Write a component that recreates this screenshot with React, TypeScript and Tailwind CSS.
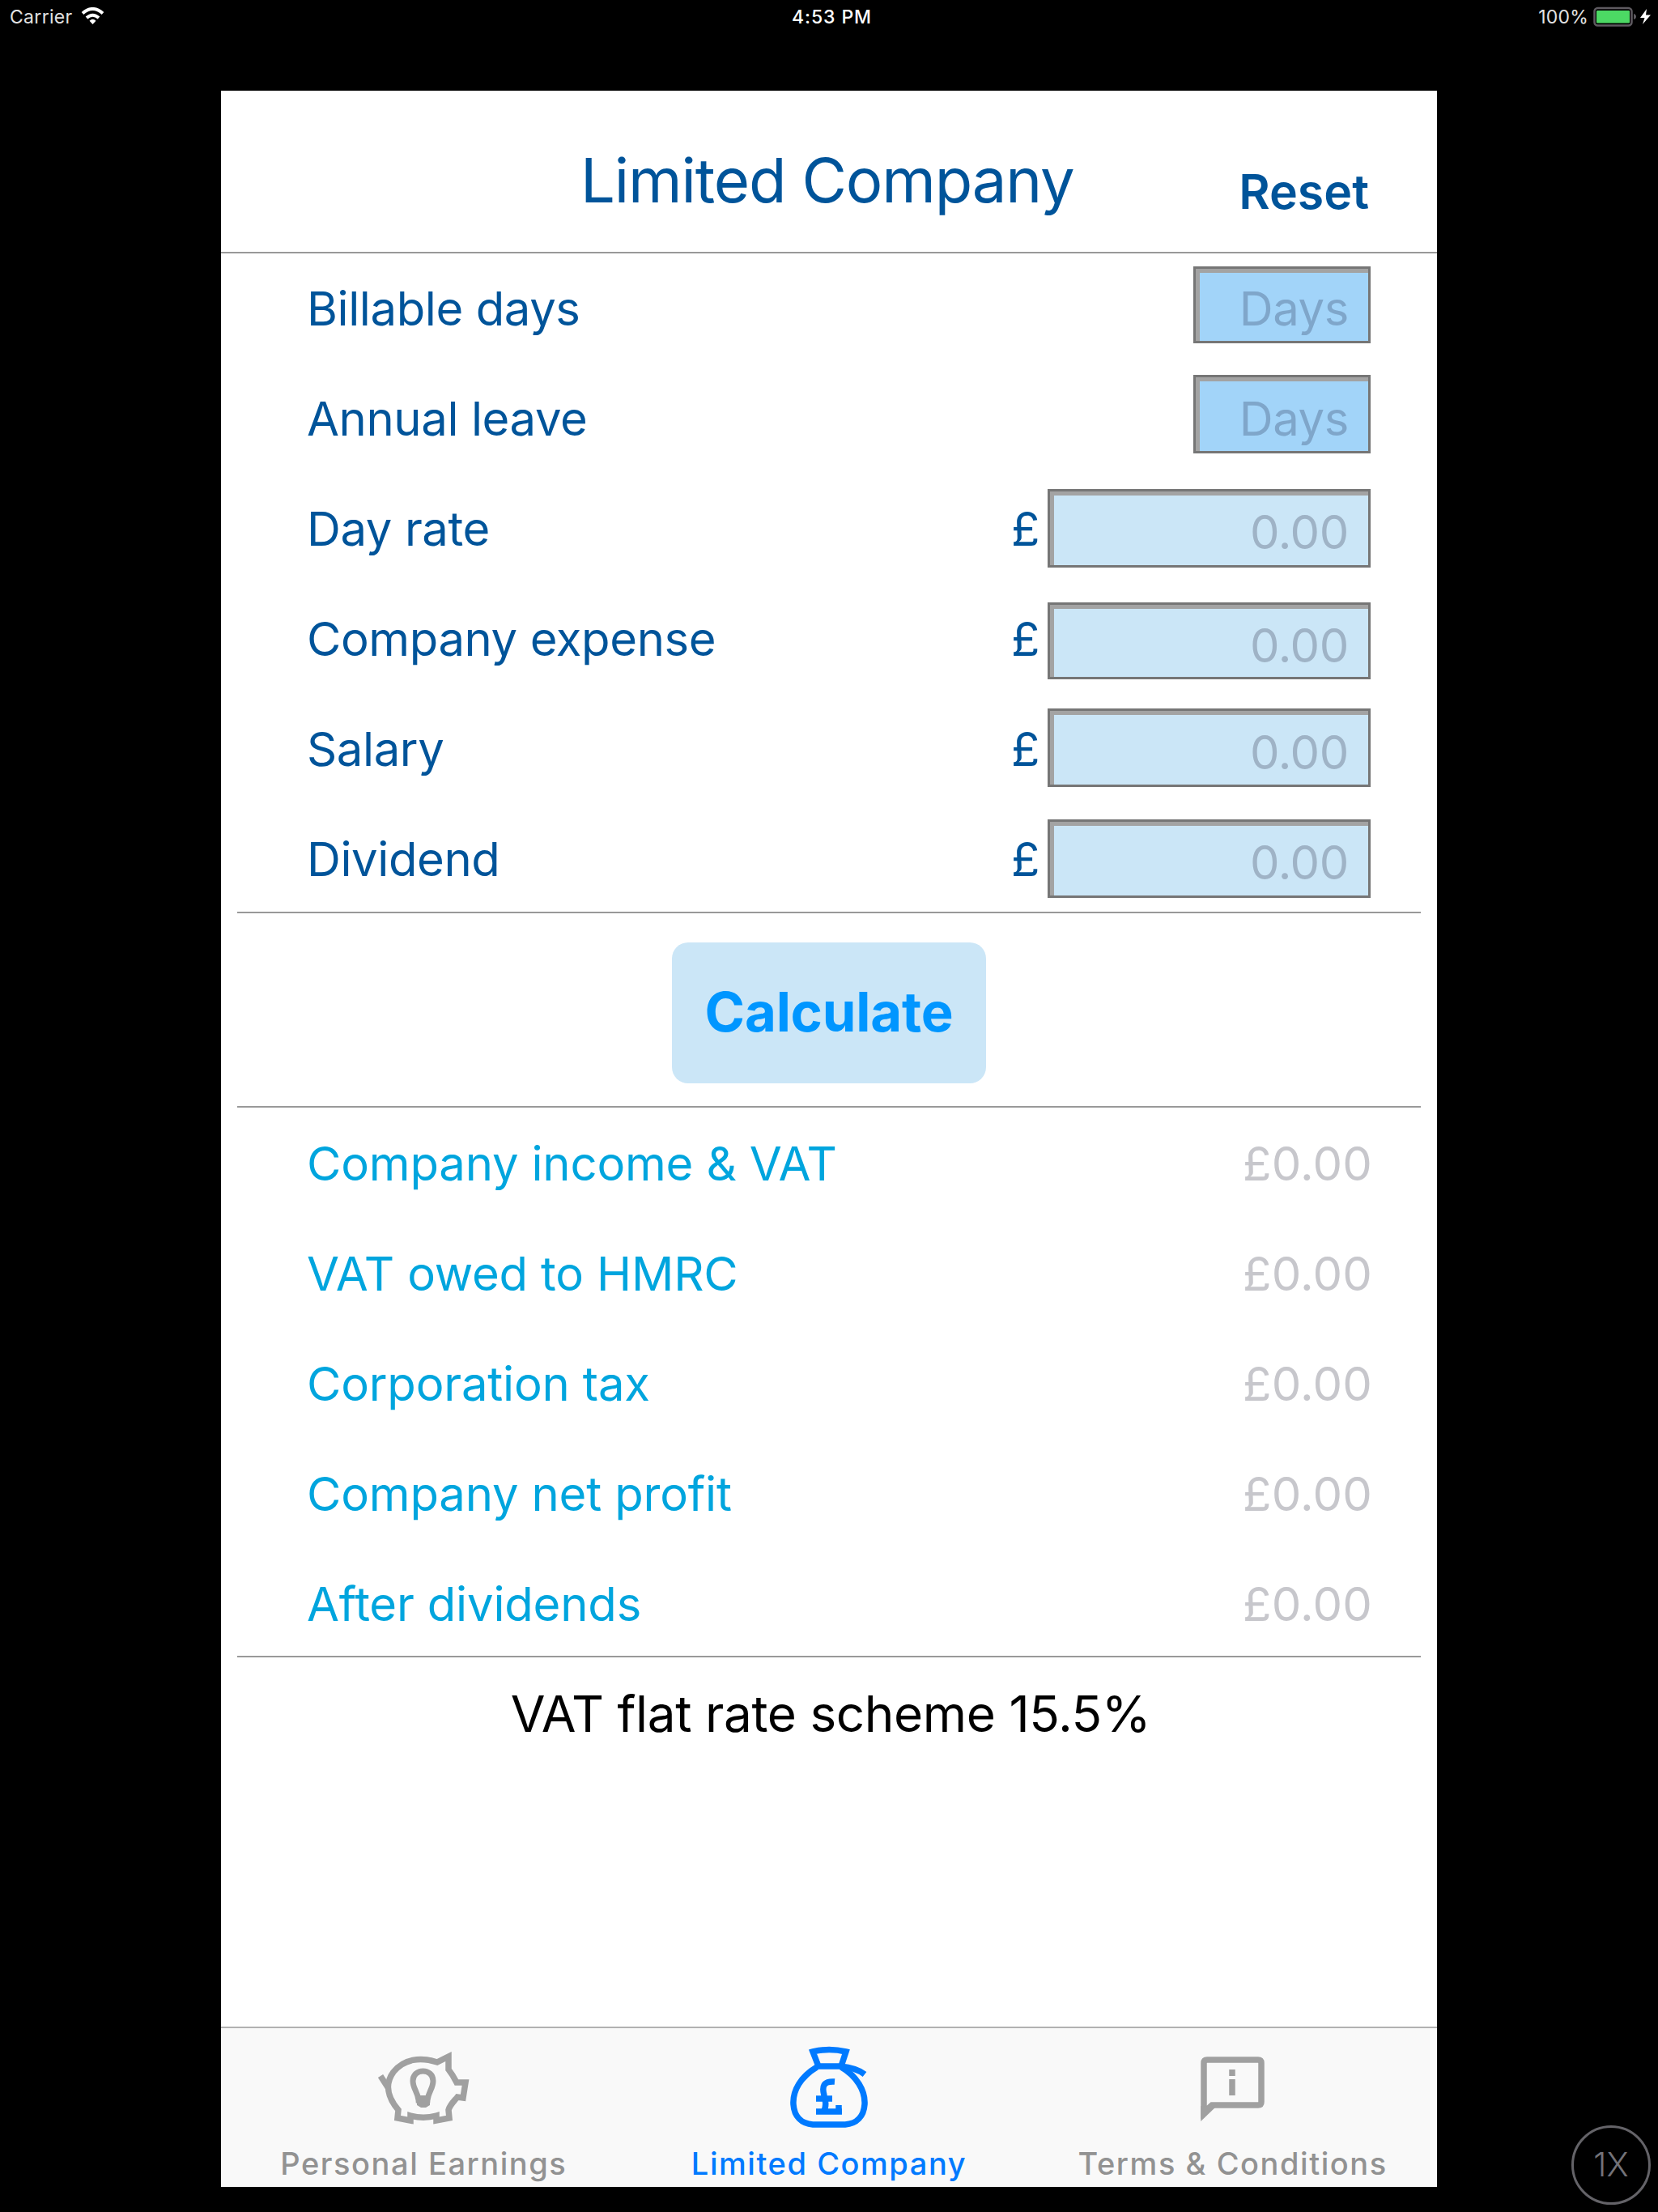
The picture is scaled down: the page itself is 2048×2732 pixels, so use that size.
import React from "react";

const inputs = [
  { label: "Billable days", kind: "days", box: "mt-[16px] h-[95px] pt-[14px]" },
  { label: "Annual leave", kind: "days", box: "mt-[14px] h-[97px] pt-[16px]" },
  { label: "Day rate", kind: "money", box: "mt-[19px] h-[97px] pt-[15px]" },
  { label: "Company expense", kind: "money", box: "mt-[23px] h-[95px] pt-[15px]" },
  { label: "Salary", kind: "money", box: "mt-[18px] h-[97px] pt-[16px]" },
  { label: "Dividend", kind: "money", box: "mt-[19px] h-[97px] pt-[15px]" },
];

const results = [
  "Company income & VAT",
  "VAT owed to HMRC",
  "Corporation tax",
  "Company net profit",
  "After dividends",
];

function PigIcon() {
  return (
    <svg viewBox="466 2532 116 94" className="h-[94px] w-[116px]" fill="none" stroke="#a0a0a0" strokeWidth="7.5">
      <path d="M541 2547 C520 2540 500 2543 487 2559 C476 2574 480 2591 493 2606 L492 2616 L508 2619 L508 2613 C519 2616 529 2616 540 2613 L540 2619 L556 2616 L555 2606 C557 2599 562 2595 566 2590 L573 2591 L576 2572 L565 2572 C562 2566 559 2561 555 2556 L555 2540 Z" />
      <path d="M471 2564 L480 2578" />
      <path d="M511 2570 C511 2554 536 2554 536 2570 C536 2580 530 2583 529 2594 L518 2594 C517 2583 511 2580 511 2570 Z" strokeWidth="7" />
      <path d="M516 2588 H532 V2600 L527 2603 H521 L516 2600 Z" fill="#a0a0a0" stroke="none" />
    </svg>
  );
}

function BagIcon() {
  return (
    <svg viewBox="974 2526 100 104" className="h-[104px] w-[100px]" fill="none" stroke="#007aff" strokeWidth="7.5">
      <path d="M1004 2534 Q1024 2529 1045 2534 L1039 2552 H1011 Z" />
      <path d="M1009 2553 C989 2565 979 2582 980 2599 C981 2614 990 2623 1004 2624 H1044 C1058 2623 1067 2614 1068 2599 C1069 2582 1058 2564 1039 2553" />
      <path d="M1038 2552 Q1058 2554 1068 2562" />
      <path d="M1031 2571 C1017 2570 1015 2577 1018 2588 C1021 2598 1020 2604 1017 2608 H1036 V2600 M1008 2592 H1028 M1008 2608 H1040" />
    </svg>
  );
}

function InfoBubbleIcon() {
  return (
    <svg viewBox="1482 2538 82 84" className="h-[84px] w-[82px]" fill="none" stroke="#a0a0a0" strokeWidth="7.5">
      <path d="M1487 2609 V2548 Q1487 2544 1491 2544 H1554 Q1558 2544 1558 2548 V2596 Q1558 2600 1554 2600 H1497 L1487 2609 Z" />
      <path d="M1483.25 2601 V2620 L1502 2602 Z" fill="#a0a0a0" stroke="none" />
      <path d="M1522 2556 V2564 M1522 2568 V2588" strokeWidth="7.5" />
    </svg>
  );
}

function StatusBar() {
  return (
    <div className="grid h-[112px] grid-cols-3 items-start text-[23px] leading-[28px] text-[#e2e2e2]">
      <div className="flex pt-[7px] pl-[12px]">
        <span className="w-[88px] tracking-[0.3px]">Carrier</span>
        <svg viewBox="0 0 28 21" className="mt-[2px] h-[21px] w-[29px]" fill="none" stroke="#fff" strokeWidth="4">
          <path d="M1.5 7.5 Q14 -3.5 26.5 7.5" />
          <path d="M6.5 13 Q14 6.5 21.5 13" />
          <path d="M14 21 L10 16.8 Q14 12.8 18 16.8 Z" fill="#fff" stroke="none" />
        </svg>
      </div>
      <div className="pt-[7px] pl-[7px] text-center font-medium tracking-[0.9px] text-white">4:53 PM</div>
      <div className="flex justify-end pt-[7px] pr-[8px]">
        <span className="mr-[6px] tracking-[0.2px]">100%</span>
        <svg viewBox="1968 8 72 26" className="mt-[1px] h-[26px] w-[72px]">
          <rect x="1969.5" y="10" width="46" height="21.5" rx="4" fill="none" stroke="#5e5a60" strokeWidth="2.5" />
          <rect x="1972" y="13" width="41" height="15.5" rx="1" fill="#4cd964" />
          <path d="M2018 17 Q2021 18 2021 20.5 Q2021 23 2018 24 Z" fill="#5e5a60" />
          <path d="M2034 11 L2026 22 H2031.5 L2029 30 L2039 18.5 H2033 Z" fill="#fff" />
        </svg>
      </div>
    </div>
  );
}

export default function App() {
  return (
    <div className="relative h-[2732px] w-[2048px] overflow-hidden bg-black font-['Inter',sans-serif]">
      <StatusBar />
      <main className="ml-[273px] flex h-[2589px] w-[1502px] flex-col bg-white">
        <header className="grid h-[201px] shrink-0 grid-cols-[444px_1fr_auto] border-b-2 border-[#999] pr-[84px] text-[#00549a]">
          <span />
          <h1 className="pt-[64px] text-[76px] leading-[92px] tracking-[-1.15px] whitespace-nowrap">Limited Company</h1>
          <button className="self-start pt-[90px] text-[59px] leading-[70px] font-semibold">Reset</button>
        </header>

        <section className="mx-[20px] h-[815px] shrink-0 border-b-2 border-[#999] pr-[62px] pl-[86px]">
          {inputs.map((row) => (
            <div
              key={row.label}
              className="flex h-[136px] items-start text-[58px] leading-[70px] tracking-[-0.4px] text-[#00549a]"
            >
              <span className="mt-[33px] flex-1">{row.label}</span>
              {row.kind === "money" && <span className="mt-[33px] mr-[10px]">£</span>}
              <div
                className={`${row.box} ${
                  row.kind === "days"
                    ? "w-[219px] bg-[#a2d4f9] text-[#7fa6ca]"
                    : "w-[399px] bg-[#cbe6f7] text-[#9fb3c6]"
                } border-[3px] border-[#767676] pr-[24px] text-right shadow-[inset_5px_5px_0_#a3a3a3]`}
              >
                {row.kind === "days" ? "Days" : "0.00"}
              </div>
            </div>
          ))}
        </section>

        <section className="mx-[20px] flex h-[240px] shrink-0 items-start justify-center border-b-2 border-[#999] pt-[36px]">
          <button className="h-[174px] w-[388px] rounded-[20px] bg-[#cbe6f7] pb-[1px] text-[67px] font-bold tracking-[-0.2px] text-[#0096ff]">
            Calculate
          </button>
        </section>

        <section className="mx-[20px] h-[679px] shrink-0 border-b-2 border-[#999] pr-[60px] pl-[86px]">
          {results.map((label) => (
            <div
              key={label}
              className="flex h-[136px] justify-between pt-[34px] text-[58px] leading-[70px] tracking-[-0.18px] text-[#00a5de]"
            >
              <span>{label}</span>
              <span className="tracking-[0.2px] text-[#c7c7cc]">£0.00</span>
            </div>
          ))}
        </section>

        <p className="pt-[34px] pl-[4px] text-center text-[62px] leading-[72px] tracking-[-0.4px] text-black">
          VAT flat rate scheme 15.5%
        </p>

        <nav className="mt-auto grid h-[198px] grid-cols-3 border-t-2 border-[#b2b2b2] bg-[#f9f9f9] text-[38px] leading-[44px] font-medium tracking-[1.55px] text-[#929292]">
          <div className="flex flex-col items-center">
            <div className="flex h-[145px] pt-[27px]">
              <PigIcon />
            </div>
            <span>Personal Earnings</span>
          </div>
          <div className="flex flex-col items-center text-[#007aff]">
            <div className="flex h-[145px] pt-[21px]">
              <BagIcon />
            </div>
            <span>Limited Company</span>
          </div>
          <div className="flex flex-col items-center pr-[4px]">
            <div className="flex h-[145px] pt-[33px]">
              <InfoBubbleIcon />
            </div>
            <span>Terms &amp; Conditions</span>
          </div>
        </nav>
      </main>
      <button className="absolute top-[2625px] left-[1941px] flex h-[98px] w-[98px] items-center justify-center rounded-full border-[3px] border-[#646368] text-[41px] font-light text-[#737278]">
        1X
      </button>
    </div>
  );
}
